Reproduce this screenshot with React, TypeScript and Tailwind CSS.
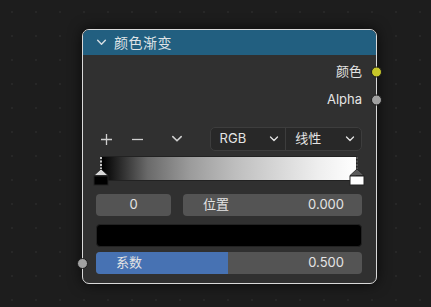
import React from "react";

const Chevron = ({ size = 10, className = "" }: { size?: number; className?: string }) => (
  <svg width={size} height={size} viewBox="0 0 10 10" className={className}>
    <polyline points="1.5,3 5,6.5 8.5,3" fill="none" stroke="currentColor" strokeWidth="1.3" strokeLinecap="round" strokeLinejoin="round" />
  </svg>
);

const Socket = ({ color, side }: { color: string; side: "left" | "right" }) => (
  <span
    className={`absolute top-1/2 -translate-y-1/2 w-[11px] h-[11px] rounded-full border border-[#1b1b1b] ${
      side === "right" ? "right-[-6px]" : "left-[-6px]"
    } ${color}`}
  />
);

// stop marker drawn over the ramp
const Marker = ({ active, fill, left }: { active: boolean; fill: string; left: string }) => (
  <svg width="16" height="30" viewBox="0 0 16 30" className={`absolute top-0 ${left}`}>
    {active && <line x1="8" y1="1" x2="8" y2="13" stroke="#fff" strokeWidth="1.5" strokeDasharray="2 1.5" />}
    {!active && <line x1="8" y1="1" x2="8" y2="13" stroke="#777" strokeWidth="1" strokeDasharray="2 1.5" />}
    <polygon points="8,13 15,19.5 1,19.5" fill={active ? "#d8d8d8" : "#5a5a5a"} stroke="#222" strokeWidth="0.8" />
    <rect x="1" y="20" width="14" height="9" fill={fill} stroke="#222" strokeWidth="1" />
  </svg>
);

export default function App() {
  return (
    <div
      className="w-[431px] h-[307px] overflow-hidden bg-[#1d1d1d] bg-[radial-gradient(circle,#272727_1px,transparent_1.2px)] bg-[size:24px_24px] text-[#e4e4e4] text-[13px]"
      style={{ fontFamily: 'Inter, "Noto Sans CJK SC", "DejaVu Sans", sans-serif' }}
    >
      <div className="ml-[82px] mt-[29px] w-[295px] h-[255px] rounded-[7px] border border-[#d9d9d9] bg-[#303030] shadow-[0_0_14px_rgba(0,0,0,0.7)] relative">
        <div className="h-[25px] rounded-t-[6px] bg-[#225f80] flex items-center pl-[13px] gap-[7px]">
          <Chevron size={11} className="text-[#d6dde2]" />
          <span className="text-[14px] text-[#dfe3e6] tracking-[0.5px]">颜色渐变</span>
        </div>

        <div className="pt-[3px]">
          <div className="relative h-[28px] flex items-center justify-end pr-[14px]">
            <span>颜色</span>
            <Socket color="bg-[#c7c729]" side="right" />
          </div>
          <div className="relative h-[28px] flex items-center justify-end pr-[14px]">
            <span>Alpha</span>
            <Socket color="bg-[#a1a1a1]" side="right" />
          </div>
        </div>

        <div className="mt-[13px] pl-[13px] pr-[14px]">
          <div className="flex items-center h-[24px]">
            <div className="flex items-center w-[114px] pl-[4px] text-[#cfcfcf]">
              <svg width="13" height="13" viewBox="0 0 13 13">
                <path d="M6.5 1v11M1 6.5h11" stroke="currentColor" strokeWidth="1.3" />
              </svg>
              <svg width="13" height="13" viewBox="0 0 13 13" className="ml-[18px]">
                <path d="M1 6.5h11" stroke="currentColor" strokeWidth="1.3" />
              </svg>
              <Chevron size={12} className="ml-[27px] text-[#cfcfcf]" />
            </div>
            <div className="flex h-[24px] w-[153px] rounded-[5px] border border-[#3d3d3d] bg-[#282828]">
              <div className="flex-1 flex items-center justify-between pl-[9px] pr-[6px] border-r border-[#3d3d3d]">
                <span>RGB</span>
                <Chevron size={10} />
              </div>
              <div className="flex-1 flex items-center justify-between pl-[9px] pr-[6px]">
                <span>线性</span>
                <Chevron size={10} />
              </div>
            </div>
          </div>

          <div className="relative mt-[5px] h-[30px] mx-[5px]">
            <div className="h-[25px] border border-[#222] bg-[linear-gradient(to_right,#000,#6a6a6a_18%,#9c9c9c_35%,#bdbdbd_52%,#d8d8d8_70%,#eeeeee_85%,#fff)]" />
            <Marker active fill="#000" left="left-[-8px]" />
            <Marker active={false} fill="#fff" left="right-[-8px]" />
          </div>

          <div className="mt-[8px] flex gap-[12px] h-[22px]">
            <div className="w-[75px] rounded-[4px] bg-[#545454] flex items-center justify-center">0</div>
            <div className="flex-1 rounded-[4px] bg-[#545454] flex items-center justify-between pl-[20px] pr-[18px]">
              <span>位置</span>
              <span>0.000</span>
            </div>
          </div>

          <div className="mt-[8px] h-[23px] rounded-[4px] bg-black border border-[#222]" />

          <div className="relative mt-[5px] h-[22px] rounded-[4px] bg-[#545454] flex overflow-visible">
            <div className="absolute left-0 top-0 h-full w-[132px] rounded-l-[4px] bg-[#4772b3]" />
            <div className="relative flex-1 flex items-center justify-between pl-[20px] pr-[18px]">
              <span>系数</span>
              <span>0.500</span>
            </div>
          </div>
        </div>

        <span className="absolute left-[-6px] top-[228px] w-[11px] h-[11px] rounded-full border border-[#1b1b1b] bg-[#a1a1a1]" />
      </div>
    </div>
  );
}
